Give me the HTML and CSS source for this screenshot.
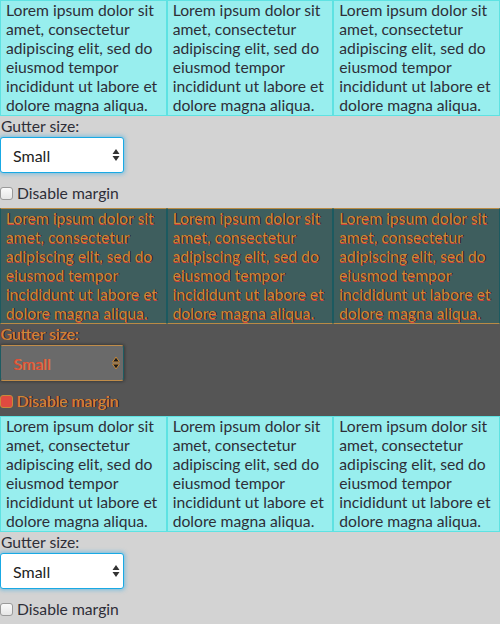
FILE: index.html
```html
<!DOCTYPE html>
<html>
<head>
<meta charset="utf-8">
<link rel="stylesheet" href="styles.css">
</head>
<body>
<section class="demo">
  <div class="grid">
    <div class="cell">Lorem ipsum dolor sit amet, consectetur adipiscing elit, sed do eiusmod tempor incididunt ut labore et dolore magna aliqua.</div>
    <div class="cell">Lorem ipsum dolor sit amet, consectetur adipiscing elit, sed do eiusmod tempor incididunt ut labore et dolore magna aliqua.</div>
    <div class="cell">Lorem ipsum dolor sit amet, consectetur adipiscing elit, sed do eiusmod tempor incididunt ut labore et dolore magna aliqua.</div>
  </div>
  <label class="label">Gutter size:</label>
  <div class="select-wrap">
    <select class="select"><option>Small</option><option>Medium</option><option>Large</option></select>
    <svg class="arrows" width="8" height="14" viewBox="0 0 8 14"><path d="M4 1 L7.5 6 H0.5 Z M4 13 L7.5 8 H0.5 Z"/></svg>
  </div>
  <label class="check"><input type="checkbox" class="box"><span>Disable margin</span></label>
</section>
<section class="demo alt">
  <div class="grid">
    <div class="cell">Lorem ipsum dolor sit amet, consectetur adipiscing elit, sed do eiusmod tempor incididunt ut labore et dolore magna aliqua.</div>
    <div class="cell">Lorem ipsum dolor sit amet, consectetur adipiscing elit, sed do eiusmod tempor incididunt ut labore et dolore magna aliqua.</div>
    <div class="cell">Lorem ipsum dolor sit amet, consectetur adipiscing elit, sed do eiusmod tempor incididunt ut labore et dolore magna aliqua.</div>
  </div>
  <label class="label">Gutter size:</label>
  <div class="select-wrap">
    <select class="select"><option>Small</option><option>Medium</option><option>Large</option></select>
    <svg class="arrows" width="8" height="14" viewBox="0 0 8 14"><path d="M4 1 L7.5 6 H0.5 Z M4 13 L7.5 8 H0.5 Z"/></svg>
  </div>
  <label class="check"><input type="checkbox" class="box"><span>Disable margin</span></label>
</section>
<section class="demo">
  <div class="grid">
    <div class="cell">Lorem ipsum dolor sit amet, consectetur adipiscing elit, sed do eiusmod tempor incididunt ut labore et dolore magna aliqua.</div>
    <div class="cell">Lorem ipsum dolor sit amet, consectetur adipiscing elit, sed do eiusmod tempor incididunt ut labore et dolore magna aliqua.</div>
    <div class="cell">Lorem ipsum dolor sit amet, consectetur adipiscing elit, sed do eiusmod tempor incididunt ut labore et dolore magna aliqua.</div>
  </div>
  <label class="label">Gutter size:</label>
  <div class="select-wrap">
    <select class="select"><option>Small</option><option>Medium</option><option>Large</option></select>
    <svg class="arrows" width="8" height="14" viewBox="0 0 8 14"><path d="M4 1 L7.5 6 H0.5 Z M4 13 L7.5 8 H0.5 Z"/></svg>
  </div>
  <label class="check"><input type="checkbox" class="box"><span>Disable margin</span></label>
</section>
</body>
</html>
```
FILE: styles.css
```css
html, body {
  margin: 0;
  padding: 0;
  background: #d3d3d3;
}
body {
  font-family: Lato, "Open Sans", sans-serif;
  font-size: 15.7px;
  color: #2e2e38;
}
.demo {
  height: 208px;
  display: flex;
  flex-direction: column;
  align-items: flex-start;
  box-sizing: border-box;
}
.grid {
  align-self: stretch;
  display: grid;
  grid-template-columns: repeat(3, 1fr);
}
.cell {
  background: #98eeee;
  border: 1px solid #5ee2e2;
  padding: 0 5px;
  line-height: 19px;
}
.label {
  display: block;
  line-height: 20px;
  padding-left: 1px;
}
.select-wrap {
  position: relative;
  margin-top: 1px;
}
.select {
  appearance: none;
  -webkit-appearance: none;
  display: block;
  width: 124px;
  height: 36px;
  box-sizing: border-box;
  border: 1px solid #19a9e4;
  border-radius: 3px;
  background: #fff;
  box-shadow: 0 0 4px 1px rgba(40, 170, 230, 0.55);
  font-family: inherit;
  font-size: 16px;
  color: #222;
  padding: 0 0 0 12px;
  outline: none;
}
.arrows {
  position: absolute;
  right: 4px;
  top: 11px;
  fill: #333;
  pointer-events: none;
}
.check {
  display: flex;
  align-items: center;
  gap: 4px;
  margin-top: 10px;
  line-height: 20px;
}
.box {
  appearance: none;
  -webkit-appearance: none;
  margin: 0;
  width: 13px;
  height: 13px;
  box-sizing: border-box;
  border: 1px solid #9a9a9a;
  border-radius: 3px;
  background: linear-gradient(#fafafa, #e6e6e6);
}

/* debug-style variant */
.alt {
  background: #555555;
}
.alt .cell {
  background: #3e5e5e;
  border-color: #b98b45 #1c5a60;
  color: #c98a3a;
  text-shadow: 1px 0 0 #1a1a1a, 0 1px 0 #d2403a;
}
.alt .label,
.alt .check span {
  color: #c98a3a;
  text-shadow: 1px 0 0 #1a1a1a, -1px 0 0 #d2403a;
}
.alt .select {
  background: #6a6a6a;
  border-color: #c08d4a;
  border-left-color: #1d5c62;
  border-right-color: #1d5c62;
  box-shadow: 0 0 3px 1px rgba(20, 20, 20, 0.4);
  color: #e24a3a;
  text-shadow: 1px 0 0 #b98b45;
}
.alt .arrows {
  fill: #1a1a1a;
  stroke: #c98a3a;
  stroke-width: 1;
}
.alt .box {
  background: #e04a40;
  border: 1px solid #c98a3a;
}
```
